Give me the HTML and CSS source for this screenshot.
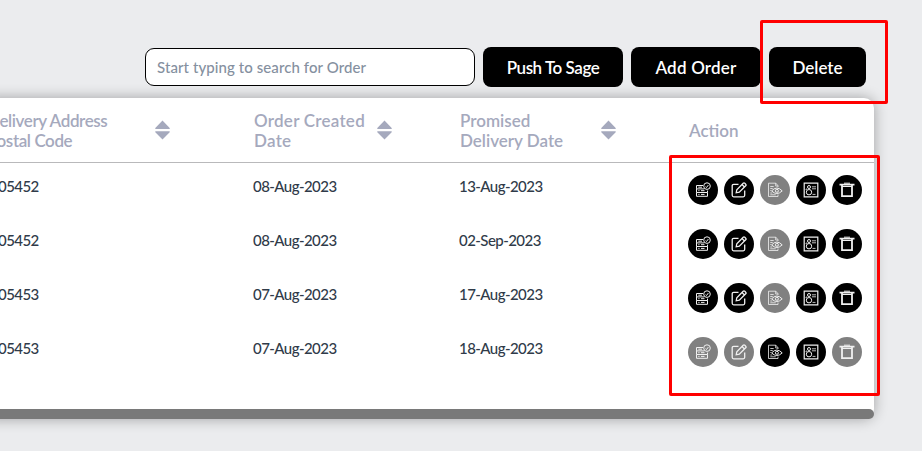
FILE: index.html
```
<!DOCTYPE html>
<html lang="en">
<head>
<meta charset="utf-8">
<title>Orders</title>
<link rel="stylesheet" href="styles.css">
</head>
<body>
<svg class="defs" width="0" height="0">
  <symbol id="i-status" viewBox="0 0 16 16">
    <path d="M8 3.5H1.5v3.4h7.8M1.5 6.9v3.6h11V8.6M1.5 10.5v3.8h11v-3.8M3.3 5.2H7M3.3 8.7h1.2M6 8.7h3.5M3.3 12.4h1.2M6 12.4h3.5"/>
    <circle cx="12" cy="4.1" r="3.3"/><path d="M10.6 4.7l.9.8 1.8-2.4"/>
  </symbol>
  <symbol id="i-edit" viewBox="0 0 16 16">
    <path d="M7.5 2.3H2.7Q1.2 2.3 1.2 3.8v9.5q0 1.5 1.5 1.5h9.5q1.5 0 1.5-1.5V8.5M5.2 10.8l.6-3.1 6.4-6.4q.8-.8 1.6 0l.9.9q.8.8 0 1.6L8.3 10.2zM11 2.5l2.5 2.5" stroke-width="1.3"/>
  </symbol>
  <symbol id="i-view" viewBox="0 0 16 16">
    <path d="M11 5V3.7L8.8 1.2H1.5v13.3h9.5v-2M8.7 1.2V4H11M3.3 4.5h3.4M3.3 6.5h2.4M3.3 8.5h1M3.3 11h2M3.3 12.8h5.5" stroke-width=".8"/>
    <path d="M4.6 8.9Q9.8 3.2 15.2 8.9Q9.8 14.2 4.6 8.9z"/><circle cx="9.9" cy="8.8" r="1.5"/>
  </symbol>
  <symbol id="i-card" viewBox="0 0 16 16">
    <path d="M1.2 1.2h13.6v13.6H1.2z" stroke-width="1.2"/>
    <circle cx="6" cy="5" r="1.5"/><circle cx="6" cy="10.2" r="2.7"/><path d="M8.9 4.8H13M8.9 6.8H13M3.1 8V7h1M9.5 12.4h3" stroke-width=".8"/>
  </symbol>
  <symbol id="i-trash" viewBox="0 0 16 16">
    <path d="M.5 2.6h15M3 3.6v10.6h10V3.6" stroke-width="1.8"/><path d="M5 1.2h6M3 4.5h10"/>
  </symbol>
  <symbol id="i-sort" viewBox="0 0 15 20">
    <path d="M7.5 .6L14.7 8V9H.3V8zM.3 11.2h14.4v1L7.5 19.6.3 12.2z"/>
  </symbol>
</svg>

<div class="toolbar">
  <input class="search" type="text" placeholder="Start typing to search for Order">
  <button class="btn push">Push To Sage</button>
  <button class="btn add">Add Order</button>
  <button class="btn delete">Delete</button>
</div>

<div class="card">
  <div class="row head">
    <div class="th postal"><span>Delivery Address<br>Postal Code</span><svg class="sort"><use href="#i-sort"/></svg></div>
    <div class="th created"><span>Order Created<br>Date</span><svg class="sort"><use href="#i-sort"/></svg></div>
    <div class="th promised"><span>Promised<br>Delivery Date</span><svg class="sort"><use href="#i-sort"/></svg></div>
    <div class="th action"><span>Action</span></div>
  </div>
  <div class="row">
    <div class="td code">05452</div><div class="td date">08-Aug-2023</div><div class="td due">13-Aug-2023</div>
    <div class="actions">
      <i><svg><use href="#i-status"/></svg></i><i><svg><use href="#i-edit"/></svg></i><i class="off"><svg><use href="#i-view"/></svg></i><i><svg><use href="#i-card"/></svg></i><i><svg><use href="#i-trash"/></svg></i>
    </div>
  </div>
  <div class="row">
    <div class="td code">05452</div><div class="td date">08-Aug-2023</div><div class="td due">02-Sep-2023</div>
    <div class="actions">
      <i><svg><use href="#i-status"/></svg></i><i><svg><use href="#i-edit"/></svg></i><i class="off"><svg><use href="#i-view"/></svg></i><i><svg><use href="#i-card"/></svg></i><i><svg><use href="#i-trash"/></svg></i>
    </div>
  </div>
  <div class="row">
    <div class="td code">05453</div><div class="td date">07-Aug-2023</div><div class="td due">17-Aug-2023</div>
    <div class="actions">
      <i><svg><use href="#i-status"/></svg></i><i><svg><use href="#i-edit"/></svg></i><i class="off"><svg><use href="#i-view"/></svg></i><i><svg><use href="#i-card"/></svg></i><i><svg><use href="#i-trash"/></svg></i>
    </div>
  </div>
  <div class="row">
    <div class="td code">05453</div><div class="td date">07-Aug-2023</div><div class="td due">18-Aug-2023</div>
    <div class="actions">
      <i class="off"><svg><use href="#i-status"/></svg></i><i class="off"><svg><use href="#i-edit"/></svg></i><i><svg><use href="#i-view"/></svg></i><i><svg><use href="#i-card"/></svg></i><i class="off"><svg><use href="#i-trash"/></svg></i>
    </div>
  </div>
  <div class="scrollbar"></div>
</div>

<div class="mark mark-delete"></div>
<div class="mark mark-actions"></div>
</body>
</html>
```
FILE: styles.css
```
* { box-sizing: border-box; }
html, body { overflow: hidden; }
body {
  margin: 0;
  height: 451px;
  background: #ebecee;
  font-family: Lato, sans-serif;
}
.defs { display: block; }

.toolbar {
  display: flex;
  align-items: center;
  justify-content: flex-end;
  gap: 8px;
  height: 98px;
  padding: 47px 56px 11px 0;
}
.search {
  width: 330px;
  height: 38px;
  padding: 0 12px 1px 11px;
  border: 1px solid #000;
  border-radius: 9px;
  background: #fff;
  font: 500 15px Lato, sans-serif;
  letter-spacing: .08px;
}
.search::placeholder { color: #8590a0; opacity: 1; }
.btn {
  height: 40px;
  padding: 0;
  border: 0;
  border-radius: 8px;
  background: #000;
  color: #fff;
  font: 600 17px Lato, sans-serif;
  white-space: nowrap;
}
.push { width: 140px; letter-spacing: -.45px; }
.add { width: 130px; letter-spacing: .2px; }
.delete { width: 97px; }

.card {
  display: flex;
  flex-direction: column;
  width: 898px;
  height: 321px;
  margin-left: -24px;
  border-radius: 10px;
  background: #fff;
  box-shadow: 0 0 14px rgba(0, 0, 0, .32);
}
.row {
  display: grid;
  grid-template-columns: 278px 206px 229px 185px;
  height: 54px;
}
.head { height: 65px; border-bottom: 1px solid #b9b9bb; }
.th {
  display: flex;
  align-items: center;
  color: #a5a9bd;
  font-size: 17px;
  font-weight: 600;
  line-height: 20px;
  white-space: nowrap;
}
.th span { padding-top: 1px; }
.sort { width: 15px; height: 20px; margin-left: auto; fill: #a5a9bd; }
.postal { padding: 0 84px 0 11px; letter-spacing: -.4px; }
.created { padding-right: 68px; letter-spacing: .25px; }
.promised { padding-right: 73px; }
.td {
  padding-top: 13px;
  color: #303b49;
  font-size: 15px;
  font-weight: 500;
  line-height: 20px;
  letter-spacing: -.55px;
}
.code { padding-left: 22px; }
.date { margin-left: -1px; }
.due { margin-left: -1px; }
.actions { display: flex; gap: 6px; margin-left: -1px; padding-top: 12px; }
.actions i {
  display: flex;
  align-items: center;
  justify-content: center;
  width: 30px;
  height: 30px;
  border-radius: 50%;
  background: #000;
}
.actions .off { background: #808080; }
.actions svg { width: 16px; height: 16px; fill: none; stroke: #f0f0f0; stroke-width: 1; }
.scrollbar { height: 10px; margin-top: auto; border-radius: 5px; background: #797979; }

.mark { position: absolute; border: 3px solid #f00; border-radius: 2px; }
.mark-delete { left: 760px; top: 20px; width: 128px; height: 84px; }
.mark-actions { left: 669px; top: 155px; width: 211px; height: 241px; }
```
